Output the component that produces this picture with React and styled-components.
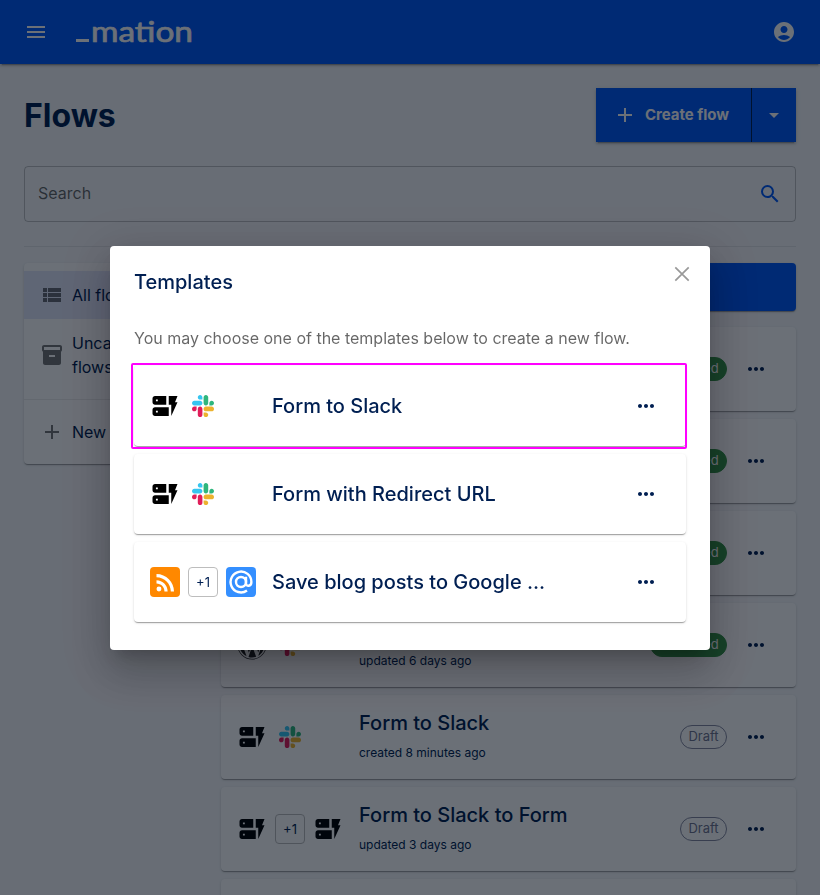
import React from 'react'
import styled, { createGlobalStyle } from 'styled-components'
import {
    MdAccountCircle,
    MdAdd,
    MdArrowDropDown,
    MdDynamicForm,
    MdInventory2,
    MdMenu,
    MdMoreHoriz,
    MdRssFeed,
    MdSearch,
    MdViewList,
} from 'react-icons/md'
import { FaWordpress } from 'react-icons/fa'

const flows = [
    { name: 'Form to Slack', time: 'updated 2 hours ago', apps: ['form', 'slack'], published: true },
    { name: 'Form with Redirect URL', time: 'updated 2 days ago', apps: ['form', 'slack'], published: true },
    { name: 'RSS to Slack', time: 'updated 4 days ago', apps: ['rss', 'slack'], published: true },
    { name: 'WordPress to Slack', time: 'updated 6 days ago', apps: ['wordpress', 'slack'], published: true },
    { name: 'Form to Slack', time: 'created 8 minutes ago', apps: ['form', 'slack'] },
    { name: 'Form to Slack to Form', time: 'updated 3 days ago', apps: ['form', '+1', 'form'] },
]

const templates = [
    { name: 'Form to Slack', apps: ['form', 'slack'], highlighted: true },
    { name: 'Form with Redirect URL', apps: ['form', 'slack'] },
    { name: 'Save blog posts to Google ...', apps: ['rss', '+1', 'mail'] },
]

function Logo() {
    return (
        <svg width="118" height="30" viewBox="0 0 118 30" fill="#fff">
            <rect x="0" y="22" width="13" height="3" />
            <text
                x="15"
                y="24.5"
                fontFamily="Lato, sans-serif"
                fontSize="28"
                fontWeight="400"
                stroke="#fff"
                strokeWidth="0.7"
                textLength="102"
                lengthAdjust="spacingAndGlyphs"
            >
                mation
            </text>
        </svg>
    )
}

function CloseIcon() {
    return (
        <svg width="24" height="24" viewBox="0 0 24 24" fill="none" stroke="currentColor" strokeWidth="1.7">
            <path d="M5.3 5.3l13.4 13.4M18.7 5.3L5.3 18.7" />
        </svg>
    )
}

function SlackIcon() {
    return (
        <svg width="22" height="22" viewBox="0 0 122.8 122.8">
            <path fill="#e01e5a" d="M25.8 77.6c0 7.1-5.8 12.9-12.9 12.9S0 84.7 0 77.6s5.8-12.9 12.9-12.9h12.9v12.9zM32.3 77.6c0-7.1 5.8-12.9 12.9-12.9s12.9 5.8 12.9 12.9v32.3c0 7.1-5.8 12.9-12.9 12.9s-12.9-5.8-12.9-12.9V77.6z" />
            <path fill="#36c5f0" d="M45.2 25.8c-7.1 0-12.9-5.8-12.9-12.9S38.1 0 45.2 0s12.9 5.8 12.9 12.9v12.9H45.2zM45.2 32.3c7.1 0 12.9 5.8 12.9 12.9s-5.8 12.9-12.9 12.9H12.9C5.8 58.1 0 52.3 0 45.2s5.8-12.9 12.9-12.9h32.3z" />
            <path fill="#2eb67d" d="M97 45.2c0-7.1 5.8-12.9 12.9-12.9s12.9 5.8 12.9 12.9-5.8 12.9-12.9 12.9H97V45.2zM90.5 45.2c0 7.1-5.8 12.9-12.9 12.9s-12.9-5.8-12.9-12.9V12.9C64.7 5.8 70.5 0 77.6 0s12.9 5.8 12.9 12.9v32.3z" />
            <path fill="#ecb22e" d="M77.6 97c7.1 0 12.9 5.8 12.9 12.9s-5.8 12.9-12.9 12.9-12.9-5.8-12.9-12.9V97h12.9zM77.6 90.5c-7.1 0-12.9-5.8-12.9-12.9s5.8-12.9 12.9-12.9h32.3c7.1 0 12.9 5.8 12.9 12.9s-5.8 12.9-12.9 12.9H77.6z" />
        </svg>
    )
}

function MailIcon() {
    return (
        <svg width="30" height="30" viewBox="0 0 30 30" fill="none" stroke="#fff" strokeWidth="2.4">
            <circle cx="15" cy="15" r="5" />
            <path d="M20 9.8v6.6c0 3.6 5.4 3.2 5.4-1.4A10.4 10.4 0 1 0 21 23.5" />
        </svg>
    )
}

function AppIcon({ app }) {
    if (app === 'form') return <Avatar><MdDynamicForm size={30} color="#000" /></Avatar>
    if (app === 'slack') return <Avatar><SlackIcon /></Avatar>
    if (app === 'rss') return <Avatar $bg="#ff8800"><MdRssFeed size={27} color="#fff" /></Avatar>
    if (app === 'mail') return <Avatar $bg="#348fff"><MailIcon /></Avatar>
    if (app === 'wordpress') return <Avatar><FaWordpress size={30} color="#222" /></Avatar>
    return <Avatar $outlined>{app}</Avatar>
}

function Row({ item, template }) {
    return (
        <Card $height={template ? 80 : 84} $highlighted={item.highlighted}>
            <Apps>
                {item.apps.map((app, index) => <AppIcon app={app} key={`app${index}`} />)}
            </Apps>
            <RowText>
                <RowTitle>{item.name}</RowTitle>
                {item.time && <RowTime>{item.time}</RowTime>}
            </RowText>
            {!template && <Chip $published={item.published}>{item.published ? 'Published' : 'Draft'}</Chip>}
            <MdMoreHoriz size={24} />
        </Card>
    )
}

export default function App() {
    return (
        <>
            <GlobalStyle />
            <Page>
                <AppBar>
                    <MdMenu size={24} />
                    <LogoLink><Logo /></LogoLink>
                    <MdAccountCircle size={24} />
                </AppBar>
                <Main>
                    <Heading>
                        <H1>Flows</H1>
                        <ButtonGroup>
                            <CreateButton><MdAdd size={24} />Create flow</CreateButton>
                            <DropButton><MdArrowDropDown size={24} /></DropButton>
                        </ButtonGroup>
                    </Heading>
                    <SearchField>
                        <SearchLabel>Search</SearchLabel>
                        <MdSearch size={24} color="#0059f7" />
                    </SearchField>
                    <Divider />
                    <Columns>
                        <Folders>
                            <FolderList>
                                <Folder $selected><MdViewList size={24} /><span>All flows</span></Folder>
                                <Folder><MdInventory2 size={24} /><span>Uncategorized flows</span></Folder>
                            </FolderList>
                            <FolderList $divided>
                                <Folder><MdAdd size={24} /><span>New folder</span></Folder>
                            </FolderList>
                        </Folders>
                        <Flows>
                            <Banner />
                            <Rows>
                                {flows.map((flow, index) => <Row item={flow} key={`flow${index}`} />)}
                                <Card $height={84} />
                            </Rows>
                        </Flows>
                    </Columns>
                </Main>
            </Page>
            <Backdrop>
                <Dialog>
                    <DialogHeader>
                        <DialogTitle>Templates</DialogTitle>
                        <CloseIcon />
                    </DialogHeader>
                    <DialogText>You may choose one of the templates below to create a new flow.</DialogText>
                    <Rows>
                        {templates.map((item, index) => <Row item={item} template key={`template${index}`} />)}
                    </Rows>
                </Dialog>
            </Backdrop>
        </>
    )
}


const GlobalStyle = createGlobalStyle`
    * {
        box-sizing: border-box;
    }
    body {
        margin: 0;
        height: 895px;
        overflow: hidden;
        background: #f7f8fa;
        color: #001f52;
        font-family: Inter, sans-serif;
        font-size: 16px;
    }
    svg {
        flex-shrink: 0;
    }
`
const Page = styled.div`
    height: 895px;
    overflow: hidden;
`
const AppBar = styled.header`
    display: flex;
    align-items: center;
    height: 64px;
    padding: 0 24px;
    color: #fff;
    background: #0059f7;
    box-shadow: 0 3px 1px -2px rgba(0, 0, 0, 0.2), 0 2px 2px rgba(0, 0, 0, 0.14), 0 1px 5px rgba(0, 0, 0, 0.12);
`
const LogoLink = styled.div`
    display: flex;
    flex: 1;
    margin-left: 28px;
`
const Main = styled.main`
    padding: 24px;
`
const Heading = styled.div`
    display: flex;
    justify-content: space-between;
    align-items: center;
    height: 54px;
`
const H1 = styled.h1`
    margin: 0;
    padding-top: 2px;
    font-size: 32px;
    font-weight: 700;
    line-height: 54px;
`
const ButtonGroup = styled.div`
    display: flex;
    height: 54px;
    background: #0059f7;
    box-shadow: 0 3px 1px -2px rgba(0, 0, 0, 0.2), 0 2px 2px rgba(0, 0, 0, 0.14), 0 1px 5px rgba(0, 0, 0, 0.12);
`
const Button = styled.button`
    display: flex;
    align-items: center;
    justify-content: center;
    padding: 0;
    border: 0;
    color: #fff;
    background: none;
    font: 700 15px/24px Inter, sans-serif;
`
const CreateButton = styled(Button)`
    width: 156px;
    gap: 8px;
    padding: 0 5px 0 0;
    border-right: 1px solid #001f52;
`
const DropButton = styled(Button)`
    width: 44px;
`
const SearchField = styled.div`
    display: flex;
    align-items: center;
    justify-content: space-between;
    height: 56px;
    margin-top: 24px;
    padding: 0 13px 1px;
    border: 1px solid rgba(0, 0, 0, 0.23);
    border-radius: 4px;
    color: rgba(0, 0, 0, 0.6);
`
const SearchLabel = styled.span`
    padding-bottom: 1px;
    line-height: 24px;
`
const Divider = styled.hr`
    height: 1px;
    margin: 24px 0 16px;
    border: 0;
    background: rgba(0, 0, 0, 0.08);
`
const Columns = styled.div`
    display: grid;
    grid-template-columns: 173px 575px;
    justify-content: space-between;
    align-items: start;
`
const Paper = styled.div`
    border-radius: 4px;
    background: #fff;
    box-shadow: 0 2px 1px -1px rgba(0, 0, 0, 0.2), 0 1px 1px rgba(0, 0, 0, 0.14), 0 1px 3px rgba(0, 0, 0, 0.12);
`
const Folders = styled(Paper)``
const FolderList = styled.div`
    padding: 8px 0;
    border-top: ${({ $divided }) => ($divided ? '1px solid rgba(0, 0, 0, 0.08)' : '0')};
`
const Folder = styled.div`
    display: flex;
    align-items: center;
    gap: 8px;
    padding: 12px 16px;
    line-height: 24px;
    background: ${({ $selected }) => ($selected ? '#e3e8fb' : 'none')};

    svg {
        color: rgba(0, 0, 0, 0.54);
    }
`
const Flows = styled.div`
    display: grid;
    gap: 16px;
`
const Banner = styled(Paper)`
    height: 48px;
    background: #0059f7;
`
const Rows = styled.div`
    display: grid;
    gap: 8px;
`
const Card = styled(Paper)`
    position: relative;
    display: flex;
    align-items: center;
    height: ${({ $height }) => $height}px;
    padding: 0 28px 0 16px;

    &::after {
        content: '';
        display: ${({ $highlighted }) => ($highlighted ? 'block' : 'none')};
        position: absolute;
        inset: -3px -1px -3px -3px;
        border: 2px solid #f0f;
        border-radius: 2px;
    }
`
const Apps = styled.div`
    display: flex;
    gap: 8px;
    width: 106px;
    margin-right: 16px;
`
const Avatar = styled.div`
    display: flex;
    align-items: center;
    justify-content: center;
    width: 30px;
    height: 30px;
    border: ${({ $outlined }) => ($outlined ? '1px solid #bdbdbd' : '0')};
    border-radius: 4px;
    background: ${({ $bg }) => $bg || 'transparent'};
    font-size: 13px;
`
const RowText = styled.div`
    display: flex;
    flex: 1;
    flex-direction: column;
    gap: 8px;
    min-width: 0;
`
const RowTitle = styled.div`
    overflow: hidden;
    font-size: 20px;
    font-weight: 500;
    line-height: 24px;
    text-overflow: ellipsis;
    white-space: nowrap;
`
const RowTime = styled.div`
    font-size: 12px;
    line-height: 20px;
`
const Chip = styled.div`
    height: 24px;
    margin-right: 17px;
    padding: 0 7.4px;
    border: 1px solid ${({ $published }) => ($published ? '#369547' : '#85889f')};
    border-radius: 12px;
    color: ${({ $published }) => ($published ? '#fff' : '#70758f')};
    background: ${({ $published }) => ($published ? '#369547' : 'transparent')};
    font-size: 13px;
    line-height: 21px;
`
const Backdrop = styled.div`
    position: fixed;
    inset: 0;
    display: flex;
    align-items: center;
    justify-content: center;
    padding-top: 1px;
    background: rgba(0, 8, 20, 0.58);
`
const Dialog = styled.div`
    width: 600px;
    height: 404px;
    padding: 16px 24px 28px;
    border-radius: 4px;
    background: #fff;
    box-shadow: 0 11px 15px -7px rgba(0, 0, 0, 0.2), 0 24px 38px 3px rgba(0, 0, 0, 0.14), 0 9px 46px 8px rgba(0, 0, 0, 0.12);
`
const DialogHeader = styled.div`
    display: flex;
    justify-content: space-between;
    align-items: flex-start;
    height: 64px;
    margin-right: -8px;

    svg {
        color: #999;
    }
`
const DialogTitle = styled.h2`
    margin: 4px 0 0;
    font-size: 20px;
    font-weight: 500;
    line-height: 32px;
`
const DialogText = styled.p`
    margin: 0 0 16px;
    color: rgba(0, 0, 0, 0.6);
    line-height: 24px;
`
